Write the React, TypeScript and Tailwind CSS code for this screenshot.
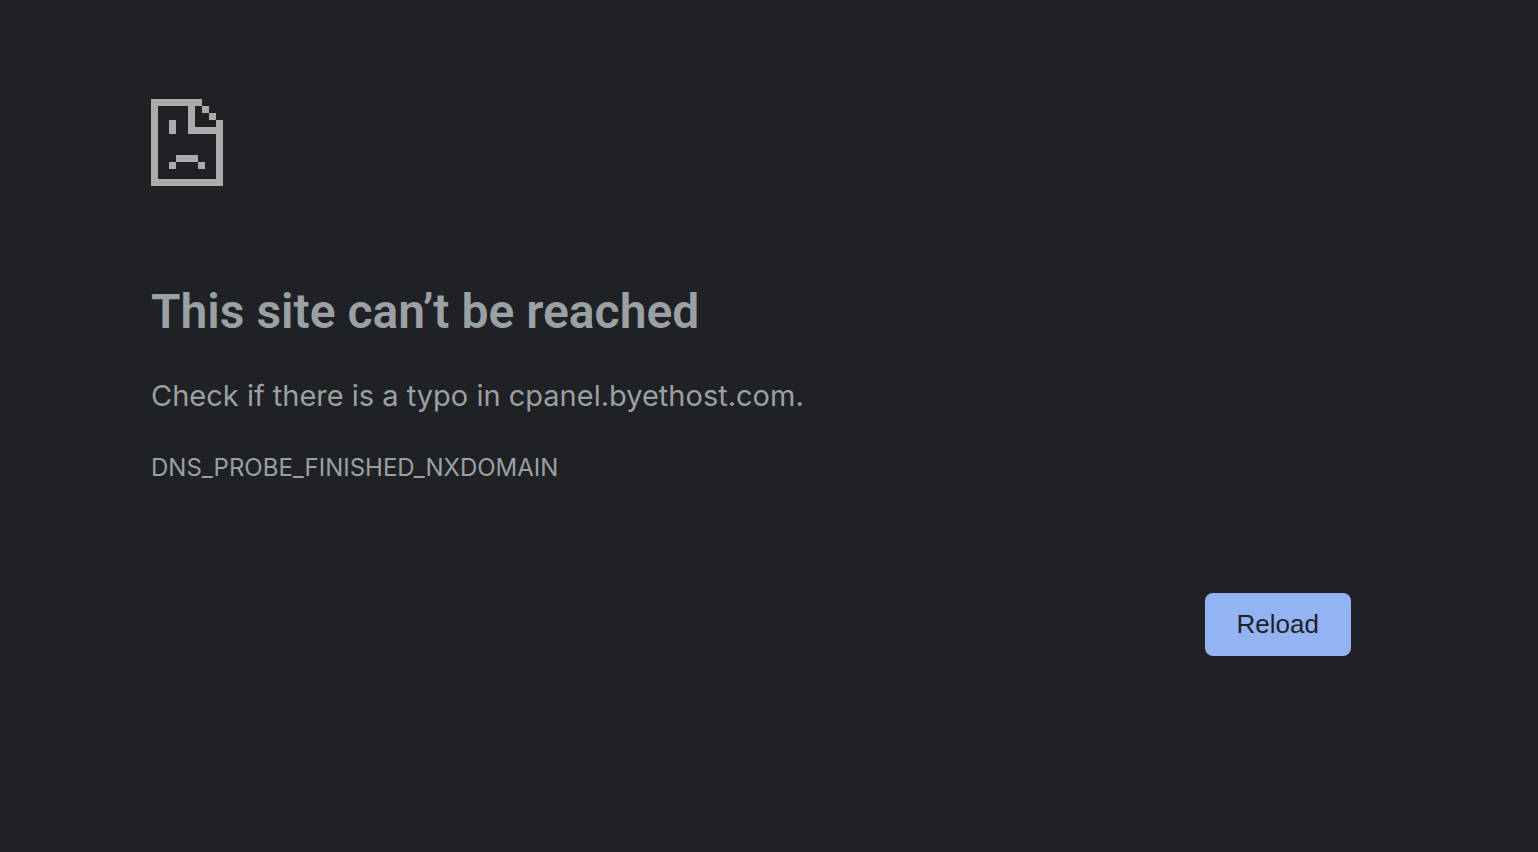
function SadPageIcon() {
  return (
    <svg
      width="72"
      height="87"
      viewBox="0 0 72 87"
      fill="#ababab"
      shapeRendering="crispEdges"
      aria-hidden="true"
    >
      <path d="M0 0h51v7H44v21h21v-7h7v66H0zM7 7v73h58V35H37V7z" fillRule="evenodd" />
      <path d="M51 7h7v7h-7zM58 14h7v7h-7z" />
      <path d="M18 21h7v14h-7z" />
      <path d="M25 56h22v7H25zM18 63h7v7h-7zM47 63h7v7h-7z" />
    </svg>
  )
}

export default function App() {
  return (
    <div className="min-h-screen bg-[#202124] pr-9 font-['Inter',sans-serif] text-[#9aa0a3]">
      <main className="mx-auto w-full max-w-[1200px] pt-[99px]">
        <SadPageIcon />

        <h1 className="mt-24 font-['Roboto',sans-serif] text-[48px] leading-[60px] font-semibold">
          This site can’t be reached
        </h1>
        <p className="mt-[30px] text-[29px] leading-[48px]">
          Check if there is a typo in cpanel.byethost.com.
        </p>
        <p className="mt-[30px] text-[24px] leading-[36px]">DNS_PROBE_FINISHED_NXDOMAIN</p>

        <div className="mt-[107px] flex justify-end">
          <button
            type="button"
            className="rounded-lg bg-[#94b3f3] px-8 py-3 font-['Liberation_Sans',sans-serif] text-[26px] leading-[39px] text-[#202124]"
          >
            Reload
          </button>
        </div>
      </main>
    </div>
  )
}
